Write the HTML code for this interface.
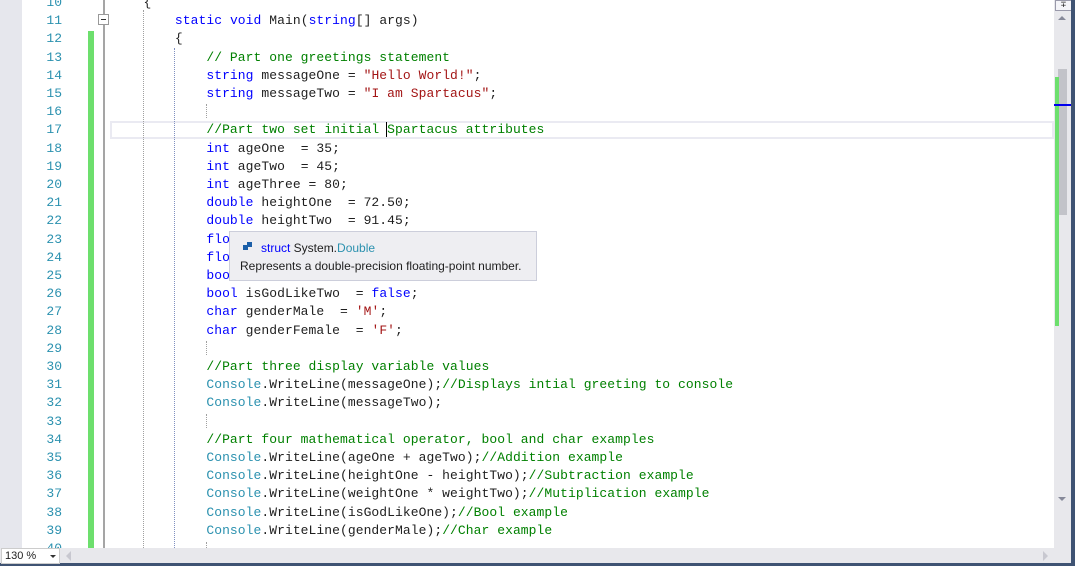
<!DOCTYPE html>
<html><head><meta charset="utf-8"><style>
body{margin:0;width:1075px;height:566px;overflow:hidden;background:#fff;position:relative;font-family:"Liberation Mono",monospace;}
.abs{position:absolute}
#nums{position:absolute;left:22px;top:-6px;width:40px;text-align:right;color:#2b91af;font-size:13px;}
#nums div,#code div{height:18.21px;line-height:18px;white-space:pre}
#code{position:absolute;left:112px;top:-6px;font-size:13px;color:#1e1e1e;letter-spacing:0.06px}
.k{color:#0000ff}.c{color:#008000}.s{color:#a31515}.t{color:#2b91af}
.dot{position:absolute;width:0;border-left:1px dotted #a0a0a0}
</style></head><body>
<div class="abs" style="left:0;top:0;width:22px;height:548px;background:#e6e7ed"></div>
<div class="abs" style="left:110px;top:121px;width:940px;height:14px;border:2px solid #eaeaf2"></div>
<div class="abs" style="left:88px;top:31px;width:6px;height:517px;background:#6ddf6d"></div>
<div class="abs" style="left:103px;top:0;width:2px;height:548px;background:#a5a5a5"></div>
<div class="abs" style="left:98px;top:14px;width:9px;height:9px;border:1px solid #999;background:#fff"><div style="position:absolute;left:2px;top:4px;width:5px;height:1px;background:#333"></div></div>
<div class="dot" style="left:143px;top:10px;height:538px"></div>
<div class="dot" style="left:174px;top:48px;height:500px;border-left-color:#8090c0"></div>
<div class="dot" style="left:206px;top:104px;height:14px"></div>
<div class="dot" style="left:206px;top:341px;height:14px"></div>
<div class="dot" style="left:206px;top:414px;height:14px"></div>
<div class="dot" style="left:206px;top:542px;height:6px"></div>
<div id="nums"><div>10</div><div>11</div><div>12</div><div>13</div><div>14</div><div>15</div><div>16</div><div>17</div><div>18</div><div>19</div><div>20</div><div>21</div><div>22</div><div>23</div><div>24</div><div>25</div><div>26</div><div>27</div><div>28</div><div>29</div><div>30</div><div>31</div><div>32</div><div>33</div><div>34</div><div>35</div><div>36</div><div>37</div><div>38</div><div>39</div><div>40</div></div>
<div id="code">
<div>    {</div>
<div>        <span class="k">static</span> <span class="k">void</span> Main(<span class="k">string</span>[] args)</div>
<div>        {</div>
<div>            <span class="c">// Part one greetings statement</span></div>
<div>            <span class="k">string</span> messageOne = <span class="s">"Hello World!"</span>;</div>
<div>            <span class="k">string</span> messageTwo = <span class="s">"I am Spartacus"</span>;</div>
<div> </div>
<div>            <span class="c">//Part two set initial <span style="border-left:1.5px solid #000;margin-left:-1px">S</span>partacus attributes</span></div>
<div>            <span class="k">int</span> ageOne  = 35;</div>
<div>            <span class="k">int</span> ageTwo  = 45;</div>
<div>            <span class="k">int</span> ageThree = 80;</div>
<div>            <span class="k">double</span> heightOne  = 72.50;</div>
<div>            <span class="k">double</span> heightTwo  = 91.45;</div>
<div>            <span class="k">flo</span></div>
<div>            <span class="k">flo</span></div>
<div>            <span class="k">boo</span></div>
<div>            <span class="k">bool</span> isGodLikeTwo  = <span class="k">false</span>;</div>
<div>            <span class="k">char</span> genderMale  = <span class="s">'M'</span>;</div>
<div>            <span class="k">char</span> genderFemale  = <span class="s">'F'</span>;</div>
<div> </div>
<div>            <span class="c">//Part three display variable values</span></div>
<div>            <span class="t">Console</span>.WriteLine(messageOne);<span class="c">//Displays intial greeting to console</span></div>
<div>            <span class="t">Console</span>.WriteLine(messageTwo);</div>
<div> </div>
<div>            <span class="c">//Part four mathematical operator, bool and char examples</span></div>
<div>            <span class="t">Console</span>.WriteLine(ageOne + ageTwo);<span class="c">//Addition example</span></div>
<div>            <span class="t">Console</span>.WriteLine(heightOne - heightTwo);<span class="c">//Subtraction example</span></div>
<div>            <span class="t">Console</span>.WriteLine(weightOne * weightTwo);<span class="c">//Mutiplication example</span></div>
<div>            <span class="t">Console</span>.WriteLine(isGodLikeOne);<span class="c">//Bool example</span></div>
<div>            <span class="t">Console</span>.WriteLine(genderMale);<span class="c">//Char example</span></div>
<div> </div>
</div>
<div class="abs" style="left:229px;top:231px;width:306px;height:48px;background:#eeeef2;border:1px solid #cccedb;font-family:'Liberation Sans',sans-serif;font-size:12px;color:#1e1e1e">
 <div class="abs" style="left:13px;top:13px;width:5px;height:5px;background:#1c5fa8"></div>
 <div class="abs" style="left:17px;top:10px;width:5px;height:5px;background:#1c5fa8"></div>
 <div class="abs" style="left:31px;top:9px"><span style="color:#0000ff">struct</span> System.<span style="color:#2b91af">Double</span></div>
 <div class="abs" style="left:10px;top:27px">Represents a double-precision floating-point number.</div>
</div>
<div class="abs" style="left:1054px;top:0;width:17px;height:548px;background:#e8e8ec"></div>
<div class="abs" style="left:1055px;top:0;width:15px;height:9px;background:#f4f4f8;border:1px solid #99a;font-size:9px;line-height:8px;text-align:center;color:#222">∓</div>
<div class="abs" style="left:1058px;top:16px;width:0;height:0;border:4px solid transparent;border-bottom:4px solid #868999;border-top:0"></div>
<div class="abs" style="left:1058px;top:497px;width:0;height:0;border:4px solid transparent;border-top:4px solid #868999;border-bottom:0"></div>
<div class="abs" style="left:1058px;top:69px;width:9px;height:146px;background:#c2c3c9"></div>
<div class="abs" style="left:1055px;top:77px;width:4px;height:249px;background:#6ddf6d"></div>
<div class="abs" style="left:1054px;top:104px;width:17px;height:2px;background:#0000ee"></div>
<div class="abs" style="left:1071px;top:0;width:4px;height:566px;background:#3f5373"></div>
<div class="abs" style="left:0;top:548px;width:1071px;height:15px;background:#e8e8ec"></div>
<div class="abs" style="left:0;top:563px;width:1075px;height:3px;background:#3f5373"></div>
<div class="abs" style="left:1px;top:548px;width:57px;height:14px;background:#fff;border:1px solid #ccc;font-family:'Liberation Sans',sans-serif;font-size:11px;line-height:14px;color:#1e1e1e"><span style="margin-left:3px">130 %</span><span style="position:absolute;right:3px;top:6px;border:3px solid transparent;border-top:3px solid #333;border-bottom:0"></span></div>
<div class="abs" style="left:66px;top:551px;border:5px solid transparent;border-right:5px solid #c8c8d0;border-left:0"></div>
<div class="abs" style="left:1043px;top:551px;border:5px solid transparent;border-left:5px solid #c8c8d0;border-right:0"></div>
</body></html>
